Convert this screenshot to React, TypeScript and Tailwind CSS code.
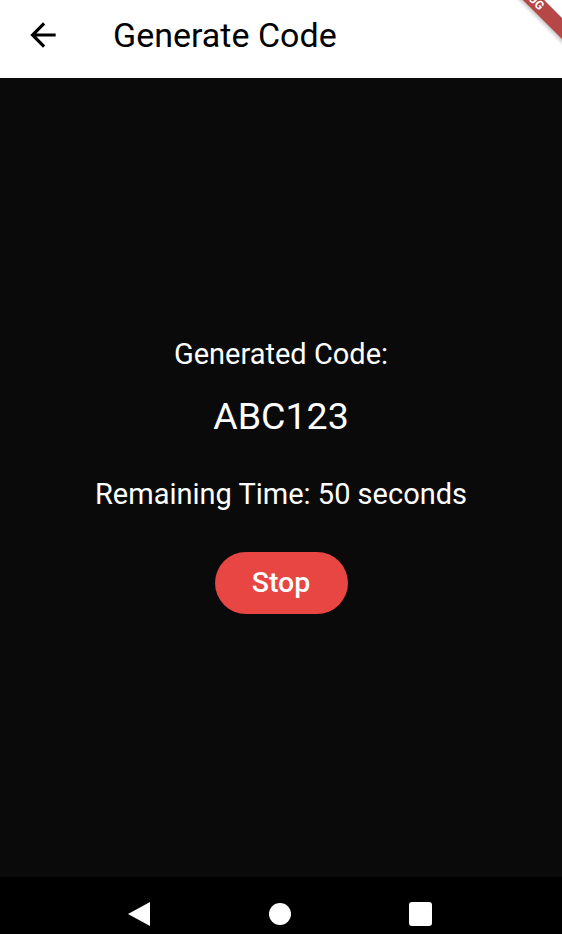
export default function App() {
  return (
    <div className="relative flex h-[934px] w-[562px] flex-col overflow-hidden bg-[#0a0a0a] font-['Roboto',sans-serif]">
      {/* App bar */}
      <header className="flex h-[78px] shrink-0 items-center bg-white pb-[9px]">
        <button className="ml-[24px] flex h-[38px] w-[38px] items-center justify-center text-black">
          <svg width="38" height="38" viewBox="0 0 24 24" fill="currentColor">
            <path d="M20 11H7.83l5.59-5.59L12 4l-8 8 8 8 1.41-1.41L7.83 13H20v-2z" />
          </svg>
        </button>
        <h1 className="ml-[51px] text-[34px] leading-none text-black">Generate Code</h1>
      </header>

      {/* Body */}
      <main className="flex flex-1 flex-col items-center justify-center pb-[4px] text-white">
        <p className="text-[29px] leading-[34px]">Generated Code:</p>
        <p className="mt-[23px] text-[37.5px] leading-[44px]">ABC123</p>
        <p className="mt-[39px] text-[29px] leading-[34px]">Remaining Time: 50 seconds</p>
        <button className="mt-[41px] h-[62px] w-[133px] rounded-full bg-[#e84642] text-[28.5px] font-medium text-white">
          Stop
        </button>
      </main>

      {/* Android nav bar */}
      <nav className="flex h-[57px] shrink-0 items-center justify-center gap-[118px] bg-black pr-[4px] pt-[16px]">
        <svg width="24" height="26" viewBox="0 0 24 26">
          <path d="M23 1 L1 13 L23 25 Z" fill="white" />
        </svg>
        <div className="h-[22px] w-[22px] rounded-full bg-white" />
        <div className="h-[24px] w-[23px] rounded-[3px] bg-white" />
      </nav>

      {/* Debug banner */}
      <div className="pointer-events-none absolute left-[468px] top-[-13px] h-[15px] w-[120px] rotate-45 bg-[#b54747] text-center text-[12px] font-bold leading-[15px] tracking-wide text-white shadow-[0_2px_4px_rgba(0,0,0,0.25)]">
        DEBUG
      </div>
    </div>
  );
}
